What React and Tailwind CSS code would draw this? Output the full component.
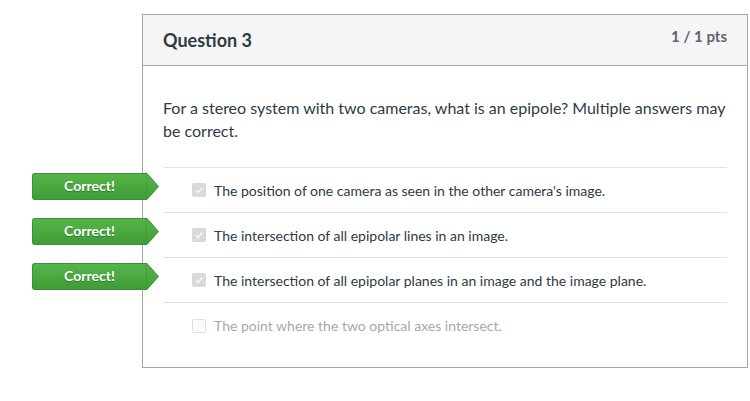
import React from 'react';

const answers = [
  { text: "The position of one camera as seen in the other camera's image.", checked: true, correct: true },
  { text: 'The intersection of all epipolar lines in an image.', checked: true, correct: true },
  { text: 'The intersection of all epipolar planes in an image and the image plane.', checked: true, correct: true },
  { text: 'The point where the two optical axes intersect.', checked: false, correct: false },
];

const CorrectBadge = () => (
  <div className="absolute left-[-131px] top-[5px] flex h-[27px] items-stretch">
    <div className="flex w-[114px] items-center justify-center rounded-l-[3px] border border-r-0 border-[#3e8e37] bg-gradient-to-b from-[#55b548] to-[#3f9c38] text-[14px] font-bold text-white [text-shadow:0_1px_1px_rgba(0,0,0,0.3)]">
      <span className="-mt-[3px]">Correct!</span>
    </div>
    <svg width="13" height="27" viewBox="0 0 13 27" className="block">
      <defs>
        <linearGradient id="g" x1="0" y1="0" x2="0" y2="1">
          <stop offset="0" stopColor="#55b548" />
          <stop offset="1" stopColor="#3f9c38" />
        </linearGradient>
      </defs>
      <path d="M0 0.5 L1 0.5 L12.5 13.5 L1 26.5 L0 26.5 Z" fill="url(#g)" stroke="#3e8e37" strokeWidth="1" />
    </svg>
  </div>
);

const Box = ({ checked }) =>
  checked ? (
    <span className="flex h-[14px] w-[14px] items-center justify-center rounded-[2px] bg-[#d9d9d9]">
      <svg width="10" height="10" viewBox="0 0 10 10">
        <path d="M1.8 5.2 L4 7.4 L8.3 2.6" fill="none" stroke="#f4f4f4" strokeWidth="1.8" />
      </svg>
    </span>
  ) : (
    <span className="block h-[14px] w-[14px] rounded-[2px] border border-[#dedede] bg-[#fbfbfb]" />
  );

export default function App() {
  return (
    <div className="h-[401px] w-[750px] bg-white pt-[14px] pl-[142px] font-['Lato','Liberation_Sans',sans-serif] text-[#2d3b45]">
      <div className="w-[606px] border border-[#a5a5a5]">
        <div className="flex h-[51px] items-start justify-between border-b border-[#a5a5a5] bg-[#f5f5f5] px-5">
          <h2 className="mt-[13px] text-[18px] font-bold leading-[24px] text-[#2d3b45]">Question 3</h2>
          <span className="mt-[11px] text-[15px] font-bold leading-[20px] text-[#5a6670]">1 / 1 pts</span>
        </div>
        <div className="px-5 pt-[30px] pb-[19px]">
          <p className="text-[16px] leading-[23px] text-[#2d3b45]">
            For a stereo system with two cameras, what is an epipole? Multiple answers may be correct.
          </p>
          <div className="mt-[25px] border-t border-[#e2e2e2]">
            {answers.map((a, i) => (
              <div
                key={i}
                className={`relative flex h-[45px] items-center gap-[8px] pl-[29px] ${i < 3 ? 'border-b border-[#e2e2e2]' : ''}`}
              >
                {a.correct && <CorrectBadge />}
                <Box checked={a.checked} />
                <span className={`text-[14px] ${a.checked ? 'text-[#2d3b45]' : 'text-[#a8a8a8]'}`}>{a.text}</span>
              </div>
            ))}
          </div>
        </div>
      </div>
    </div>
  );
}
